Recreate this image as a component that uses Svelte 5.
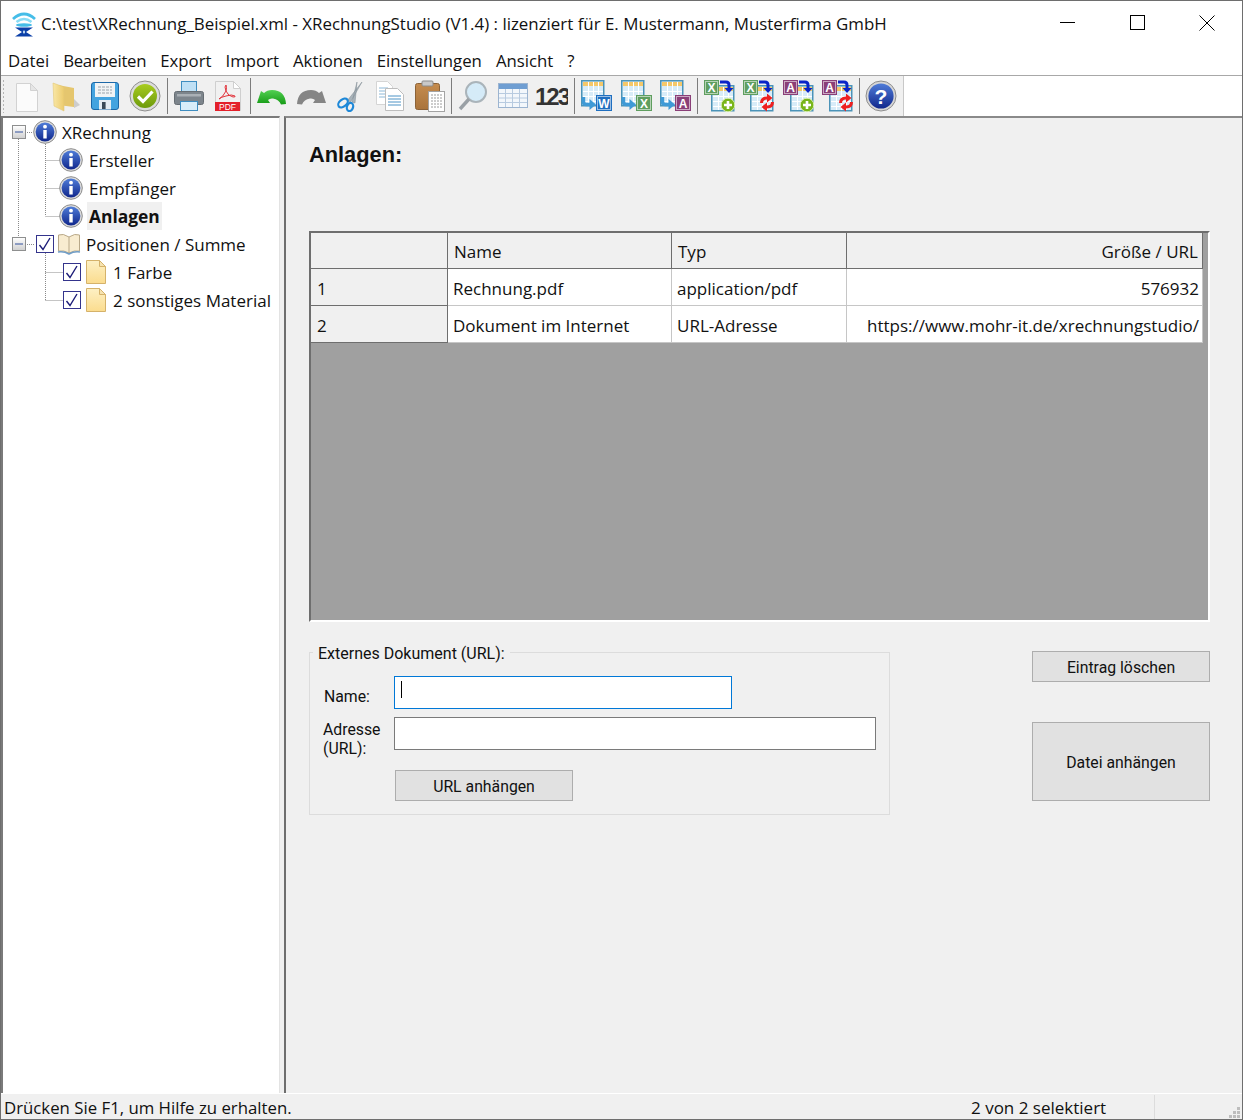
<script>
  const menus = ["Datei", "Bearbeiten", "Export", "Import", "Aktionen", "Einstellungen", "Ansicht", "?"];

  const toolGroups = [
    ["new", "open", "save", "check"],
    ["print", "pdf"],
    ["undo", "redo", "cut", "copy", "paste"],
    ["search", "table", "num"],
    ["expW", "expX", "expA"],
    ["impXadd", "impXsync", "impAadd", "impAsync"],
    ["help"]
  ];

  const rows = [
    { nr: 1, name: "Rechnung.pdf", typ: "application/pdf", size: "576932" },
    { nr: 2, name: "Dokument im Internet", typ: "URL-Adresse", size: "https://www.mohr-it.de/xrechnungstudio/" }
  ];

  const exportColors = { W: "#1f6fc0", X: "#5f9e5f", A: "#8a3f78" };
</script>

{#snippet sheet(x, y)}
  <rect x={x + 0.75} y={y + 0.75} width="22" height="25" fill="#d8ecf8" stroke="#4b93b8" stroke-width="1.5" />
  <rect x={x + 2} y={y + 2} width="20" height="4" fill="#f5c869" />
  <path
    d="M{x + 2} {y + 11.5}h20M{x + 2} {y + 16.5}h20M{x + 2} {y + 21.5}h20M{x + 7.5} {y + 2}v23M{x + 12.5} {y + 2}v23M{x + 17.5} {y + 2}v23"
    stroke="#fff"
    fill="none" />
{/snippet}

{#snippet badge(x, y, letter, size)}
  <rect x={x + 0.5} y={y + 0.5} width={size - 1} height={size - 1} fill={exportColors[letter]} stroke={exportColors[letter]} />
  <rect x={x + 1.5} y={y + 1.5} width={size - 3} height={size - 3} fill="none" stroke="#fff" stroke-opacity="0.55" />
  <text x={x + size / 2} y={y + size - 3.5} class="badge-label" text-anchor="middle">{letter}</text>
{/snippet}

{#snippet exportIcon(letter)}
  {@render sheet(1, 0)}
  <path d="M3.5 17v4.5q0 3 3 3h4" stroke="#3f9ad6" stroke-width="3.4" fill="none" />
  <path d="M9.5 19l6.5 5.5l-6.5 5.500z" fill="#3f9ad6" />
  {@render badge(16, 15, letter, 16)}
{/snippet}

{#snippet importIcon(letter, action)}
  {@render sheet(8, 5)}
  {@render badge(1, 0, letter, 15)}
  <path d="M17 2h6q3 0 3 3v4" stroke="#0a24c8" stroke-width="3" fill="none" />
  <path d="M21.5 8h9l-4.5 5z" fill="#0a24c8" />
  {#if action === "add"}
    <circle cx="25" cy="25" r="6.8" fill="#79b51a" stroke="#d9eeb0" />
    <path d="M21 25h8M25 21v8" stroke="#fff" stroke-width="2.6" />
  {:else}
    <path d="M19.5 23q0 -5 5.500 -5h1" stroke="#ee2020" stroke-width="3" fill="none" />
    <path d="M25 13.500l5.500 4.500l-5.500 4.500z" fill="#ee2020" />
    <path d="M30.500 22q0 5 -5.500 5h-1" stroke="#ee2020" stroke-width="3" fill="none" />
    <path d="M25 22.500l-5.500 4.500l5.500 4.500z" fill="#ee2020" />
  {/if}
{/snippet}

{#snippet icon(name)}
  <svg class="tool-icon" width="32" height="32" viewBox="0 0 32 32">
    {#if name === "new"}
      <path d="M5.500 3.500h14l7 7v21h-21z" fill="#fbfbfb" stroke="#d2d2d2" />
      <path d="M19.500 3.500v7h7z" fill="#e6e6e6" stroke="#d2d2d2" />
    {:else if name === "open"}
      <path d="M8 5l16 3v19l-16 -2z" fill="#e5c66e" />
      <path d="M3 3l11 4v24l-10 -5z" fill="url(#folder)" stroke="#e3c777" stroke-width="0.6" />
      <path d="M24 19l6 6l-6 3z" fill="#bdbdbd" opacity="0.7" />
    {:else if name === "save"}
      <rect x="2.500" y="2.500" width="27" height="27" rx="2.500" fill="#44a3df" stroke="#1d68a8" />
      <rect x="6" y="3" width="20" height="14" fill="#f0f3f5" />
      <path d="M9 7h14M9 10h14M9 13h14" stroke="#9aa4ab" stroke-width="1.200" stroke-dasharray="3 1" />
      <rect x="10" y="20" width="12" height="9.500" fill="#e5edf3" />
      <rect x="13" y="22" width="3.600" height="7" fill="#3a4a58" />
    {:else if name === "check"}
      <circle cx="16" cy="16" r="15" fill="#dcdcdc" stroke="#8f8f8f" />
      <circle cx="16" cy="16" r="12" fill="url(#green)" />
      <path d="M9 16.500l5 5l9.500 -10" stroke="#fff" stroke-width="3.200" fill="none" />
    {:else if name === "print"}
      <rect x="8.500" y="1.500" width="15" height="11" fill="#bfe0f5" stroke="#3f8dc0" />
      <rect x="1.500" y="11.500" width="29" height="13" rx="2" fill="#7d858c" stroke="#666d73" />
      <rect x="4" y="14" width="24" height="2.500" fill="#aab0b5" />
      <rect x="7.500" y="21.500" width="17" height="9" fill="#d9edf9" stroke="#3f8dc0" />
    {:else if name === "pdf"}
      <path d="M3.500 1.500h18l7 7v22h-25z" fill="#f1f1f1" stroke="#cfcfcf" />
      <path d="M21.500 1.500v7h7z" fill="#fff" stroke="#cfcfcf" />
      <path d="M7 19q4 -2 7 -8q1 -4 0 -6q-2 1 0 6q2 5 7 6q3 0 2 -1q-3 -2 -9 0q-5 1 -7 3z" fill="none" stroke="#e2323a" stroke-width="1" />
      <rect x="3" y="22" width="25" height="9" fill="#e3202a" />
      <text x="15.500" y="29.500" class="pdf-label" text-anchor="middle">PDF</text>
    {:else if name === "undo"}
      <path d="M30 23q-1 -14 -14 -14q-5 0 -8 3l-3 -2l-4 12h13l-2 -3q2 -2 5 -1.500q6 1 8 6z" fill="url(#undo)" transform="translate(0 1)" />
    {:else if name === "redo"}
      <path d="M2 23q1 -14 14 -14q5 0 8 3l3 -2l4 12h-13l2 -3q-2 -2 -5 -1.500q-6 1 -8 6z" fill="#858585" transform="translate(0 1)" />
    {:else if name === "cut"}
      <path d="M27 2l-15 19l3 2zM22 2l-5 20l3 1z" fill="#a9b3ba" stroke="#7e8a92" stroke-width="0.5" />
      <ellipse cx="8" cy="23" rx="5.500" ry="3.500" transform="rotate(-40 8 23)" fill="none" stroke="#1e88d8" stroke-width="2.200" />
      <ellipse cx="15" cy="27" rx="3" ry="4.200" transform="rotate(20 15 27)" fill="none" stroke="#1e88d8" stroke-width="2.200" />
    {:else if name === "copy"}
      <path d="M2.500 1.500h11l5 5v18h-16z" fill="#fff" stroke="#d5d5d5" />
      <path d="M5 8h9M5 11h9M5 14h9M5 17h9" stroke="#8cb8d8" />
      <path d="M11.500 8.500h12l6 6v16h-18z" fill="#fff" stroke="#bdbdbd" />
      <path d="M14 16h13M14 19h13M14 22h13M14 25h13" stroke="#4d93c6" />
    {:else if name === "paste"}
      <rect x="1.500" y="3.500" width="24" height="26" rx="2" fill="url(#board)" stroke="#8b6238" />
      <rect x="8" y="1" width="11" height="5" rx="1" fill="#c9c9c9" stroke="#8c8c8c" />
      <rect x="14.500" y="11.500" width="16" height="20" fill="#fff" stroke="#a3a3a3" />
      <path d="M17 15h11M17 18h11M17 21h11M17 24h11M17 27h11" stroke="#9a9a9a" stroke-dasharray="2 1" />
    {:else if name === "search"}
      <circle cx="19" cy="12" r="10" fill="#d5ebf8" stroke="#aab4ba" stroke-width="2" />
      <path d="M12 19L3 29" stroke="#9aa0a5" stroke-width="3.400" />
    {:else if name === "table"}
      <rect x="1.500" y="3.500" width="29" height="24" fill="#f3f7fb" stroke="#9cb4d0" />
      <rect x="2" y="4" width="28" height="5" fill="#6f9ed2" />
      <path d="M2 13.500h28M2 18h28M2 22.500h28M8.500 9v18M15.500 9v18M22.500 9v18" stroke="#b8cbe0" fill="none" />
    {:else if name === "num"}
      <text x="16" y="25" class="num-label" text-anchor="middle">123</text>
    {:else if name === "expW"}
      {@render exportIcon("W")}
    {:else if name === "expX"}
      {@render exportIcon("X")}
    {:else if name === "expA"}
      {@render exportIcon("A")}
    {:else if name === "impXadd"}
      {@render importIcon("X", "add")}
    {:else if name === "impXsync"}
      {@render importIcon("X", "sync")}
    {:else if name === "impAadd"}
      {@render importIcon("A", "add")}
    {:else if name === "impAsync"}
      {@render importIcon("A", "sync")}
    {:else if name === "help"}
      <circle cx="16" cy="16" r="15" fill="#d6d6d6" stroke="#8d8d8d" />
      <circle cx="16" cy="16" r="12.600" fill="url(#blue)" />
      <text x="16" y="23.500" class="help-label" text-anchor="middle">?</text>
    {/if}
  </svg>
{/snippet}

{#snippet info()}
  <svg class="node-icon" width="24" height="24" viewBox="0 0 24 24">
    <circle cx="12" cy="12" r="11.300" fill="#dcdcdc" stroke="#8d8d8d" />
    <circle cx="12" cy="12" r="9.400" fill="url(#blue)" />
    <circle cx="12" cy="6.700" r="1.900" fill="#fff" />
    <rect x="10.300" y="10" width="3.400" height="8.500" fill="#fff" />
  </svg>
{/snippet}

{#snippet check()}
  <svg class="node-icon" width="18" height="18" viewBox="0 0 18 18">
    <rect x="0.500" y="0.500" width="17" height="17" fill="#fff" stroke="#34348c" />
    <path d="M3.500 10l3.500 4.500L14 3" stroke="#1c1c78" stroke-width="1.400" fill="none" />
  </svg>
{/snippet}

{#snippet note()}
  <svg class="node-icon" width="20" height="24" viewBox="0 0 20 24">
    <path d="M0.500 0.500h13l6 6v17h-19z" fill="url(#note)" stroke="#d5b26a" />
    <path d="M13.500 0.500v6h6z" fill="#f6e3b0" stroke="#d5b26a" />
  </svg>
{/snippet}

{#snippet expander()}
  <svg class="expander" width="14" height="14" viewBox="0 0 14 14">
    <rect x="0.500" y="0.500" width="13" height="13" fill="url(#expander)" stroke="#8e8f8f" />
    <path d="M3 7h8" stroke="#33519c" />
  </svg>
{/snippet}

<svg class="defs" width="0" height="0">
  <defs>
    <linearGradient id="blue" x1="0" y1="0" x2="0" y2="1">
      <stop offset="0" stop-color="#4f7cd8" />
      <stop offset="1" stop-color="#10278c" />
    </linearGradient>
    <linearGradient id="green" x1="0" y1="0" x2="0" y2="1">
      <stop offset="0" stop-color="#a8cc20" />
      <stop offset="1" stop-color="#6d9a0c" />
    </linearGradient>
    <linearGradient id="undo" x1="0" y1="0" x2="0" y2="1">
      <stop offset="0" stop-color="#52d052" />
      <stop offset="1" stop-color="#159a15" />
    </linearGradient>
    <linearGradient id="folder" x1="0" y1="0" x2="1" y2="0">
      <stop offset="0" stop-color="#f9e7a6" />
      <stop offset="1" stop-color="#eccb6d" />
    </linearGradient>
    <linearGradient id="board" x1="0" y1="0" x2="0" y2="1">
      <stop offset="0" stop-color="#c58c4f" />
      <stop offset="1" stop-color="#a9743c" />
    </linearGradient>
    <linearGradient id="note" x1="0" y1="0" x2="0" y2="1">
      <stop offset="0" stop-color="#fdf0c4" />
      <stop offset="1" stop-color="#fbdc8e" />
    </linearGradient>
    <linearGradient id="expander" x1="0" y1="0" x2="0" y2="1">
      <stop offset="0" stop-color="#fff" />
      <stop offset="1" stop-color="#cfcfcf" />
    </linearGradient>
  </defs>
</svg>

<div class="window">
  <header class="titlebar">
    <svg class="logo" width="26" height="26" viewBox="0 0 26 26">
      <path d="M2 8q11 -10 22 0" stroke="#45bde8" stroke-width="2.800" fill="none" />
      <path d="M5.500 11q7.500 -6 15 0" stroke="#8adcf5" stroke-width="2.600" fill="none" />
      <ellipse cx="13" cy="14" rx="8" ry="1.800" fill="#45bde8" />
      <path d="M4 16.500h18l-7 4.500l7 4.500H4l7 -4.500z" fill="#0b3fa8" />
      <path d="M13 19l1.200 2l-1.200 2l-1.200 -2z" fill="#cfe6f8" />
    </svg>
    <span class="title">C:\test\XRechnung_Beispiel.xml - XRechnungStudio (V1.4) : lizenziert für E. Mustermann, Musterfirma GmbH</span>
    <div class="window-controls">
      <svg width="16" height="16" viewBox="0 0 16 16"><path d="M0 7.500h15" stroke="#000" /></svg>
      <svg width="16" height="16" viewBox="0 0 16 16"><rect x="0.500" y="0.500" width="14" height="14" fill="none" stroke="#000" /></svg>
      <svg width="16" height="16" viewBox="0 0 16 16"><path d="M0.500 0.500l15 15M15.500 0.500l-15 15" stroke="#000" /></svg>
    </div>
  </header>

  <nav class="menubar">
    {#each menus as menu}
      <span class="menu-item">{menu}</span>
    {/each}
  </nav>

  <div class="toolbar">
    <div class="tools">
      <span class="gripper"></span>
      {#each toolGroups as group}
        <div class="tool-group">
          {#each group as name}
            <button class="tool">{@render icon(name)}</button>
          {/each}
        </div>
      {/each}
    </div>
  </div>

  <div class="workspace">
    <aside class="tree">
      <svg class="tree-lines" width="100" height="190">
        <path d="M16.500 21V119M23 14.500h8M43.500 24V98M43.500 42.500h15M43.500 70.500h15M43.500 98.500h15M23 126.500h10M43.500 135V182M43.500 154.500h17M43.500 182.500h17" stroke="#8a8a8a" stroke-dasharray="1 1" fill="none" />
      </svg>
      <div class="node root">{@render expander()}{@render info()}<span class="label">XRechnung</span></div>
      <div class="node child">{@render info()}<span class="label">Ersteller</span></div>
      <div class="node child">{@render info()}<span class="label">Empfänger</span></div>
      <div class="node child">{@render info()}<span class="label selected">Anlagen</span></div>
      <div class="node root positions">
        {@render expander()}
        {@render check()}
        <svg class="node-icon book" width="24" height="22" viewBox="0 0 24 22">
          <path d="M12 4Q6 0 1.500 2v16q5 -1 10.500 2q5.500 -3 10.500 -2V2Q18 0 12 4z" fill="#f8ecd0" stroke="#b8a888" />
          <path d="M12 4v16" stroke="#b8a888" />
          <path d="M1 19q6 -1 11 2q5 -3 11 -2" stroke="#6f9cc6" stroke-width="1.500" fill="none" />
        </svg>
        <span class="label">Positionen / Summe</span>
      </div>
      <div class="node leaf">{@render check()}{@render note()}<span class="label">1 Farbe</span></div>
      <div class="node leaf">{@render check()}{@render note()}<span class="label">2 sonstiges Material</span></div>
    </aside>

    <main class="content">
      <h1>Anlagen:</h1>

      <div class="grid-view">
        <table>
          <thead>
            <tr>
              <th class="col-nr"></th>
              <th class="col-name">Name</th>
              <th class="col-typ">Typ</th>
              <th class="col-size">Größe / URL</th>
            </tr>
          </thead>
          <tbody>
            {#each rows as row}
              <tr>
                <th class="row-head">{row.nr}</th>
                <td>{row.name}</td>
                <td>{row.typ}</td>
                <td class="right">{row.size}</td>
              </tr>
            {/each}
          </tbody>
        </table>
      </div>

      <div class="lower">
        <fieldset>
          <legend>Externes Dokument (URL):</legend>
          <div class="form">
            <label for="doc-name" class="name-label">Name:</label>
            <div class="focus-field">
              <input id="doc-name" class="focused" type="text" />
              <span class="caret"></span>
            </div>
            <label for="doc-url" class="url-label">Adresse<br />(URL):</label>
            <input id="doc-url" type="text" />
            <button class="btn url-btn">URL anhängen</button>
          </div>
        </fieldset>

        <div class="side-actions">
          <button class="btn delete-btn">Eintrag löschen</button>
          <button class="btn attach-btn">Datei anhängen</button>
        </div>
      </div>
    </main>
  </div>

  <footer class="statusbar">
    <span class="status-text">Drücken Sie F1, um Hilfe zu erhalten.</span>
    <span class="status-count">2 von 2 selektiert</span>
    <span class="status-rest">
      <svg width="12" height="12" viewBox="0 0 12 12" fill="#bdbdbd">
        <rect x="8" y="0" width="3" height="3" />
        <rect x="4" y="4" width="3" height="3" />
        <rect x="8" y="4" width="3" height="3" />
        <rect x="0" y="8" width="3" height="3" />
        <rect x="4" y="8" width="3" height="3" />
        <rect x="8" y="8" width="3" height="3" />
      </svg>
    </span>
  </footer>
</div>

<style>
  :global(body) {
    background: #f0f0f0;
  }

  .defs {
    position: absolute;
  }

  .window {
    box-sizing: border-box;
    width: 1243px;
    height: 1120px;
    display: flex;
    flex-direction: column;
    border: 1px solid #6e6e6e;
    font-family: "Open Sans", "Noto Sans", sans-serif;
    font-size: 17px;
    color: #111;
    background: #f0f0f0;
    overflow: hidden;
  }

  .titlebar {
    height: 45px;
    flex: none;
    display: flex;
    align-items: center;
    background: #fff;
    padding-left: 10px;
  }

  .logo {
    margin-right: 4px;
  }

  .title {
    flex: 1;
    font-size: 16.9px;
    white-space: nowrap;
  }

  .window-controls {
    display: flex;
    gap: 53.5px;
    padding-right: 27px;
    margin-bottom: 2px;
  }

  .menubar {
    box-sizing: border-box;
    height: 30px;
    flex: none;
    display: flex;
    align-items: center;
    gap: 14px;
    padding: 0 0 1px 7px;
    font-size: 16.8px;
    background: #fff;
    border-bottom: 1px solid #a8a8a8;
  }

  .menu-item:nth-child(2) {
    letter-spacing: -0.3px;
  }

  .toolbar {
    height: 40px;
    flex: none;
    display: flex;
    background: #fff;
  }

  .tools {
    display: flex;
    align-items: center;
    padding-left: 1px;
    background: #f0f0f0;
  }

  .gripper {
    width: 3px;
    height: 34px;
    margin-right: 0.5px;
    background-image: radial-gradient(#b4b4b4 1px, transparent 1px);
    background-size: 3px 4px;
  }

  .tool-group {
    display: flex;
    height: 36px;
    align-items: center;
    padding: 0 2px 0 1.5px;
    border-right: 1px solid #7c7c7c;
  }

  .tool-group:last-child {
    height: 40px;
    border-right-color: #c8c8c8;
  }

  .tool {
    width: 39.4px;
    height: 36px;
    padding: 0;
    border: 0;
    background: none;
    display: flex;
    align-items: center;
    justify-content: center;
  }

  .pdf-label {
    font-family: "Liberation Sans", sans-serif;
    font-size: 8.500px;
    fill: #fff;
  }

  .badge-label {
    font-family: "Liberation Sans", sans-serif;
    font-weight: 700;
    font-size: 12px;
    fill: #fff;
  }

  .num-label {
    font-family: "Liberation Sans", sans-serif;
    font-weight: 700;
    font-size: 24px;
    letter-spacing: -2px;
    fill: #333;
  }

  .help-label {
    font-family: "Liberation Sans", sans-serif;
    font-weight: 700;
    font-size: 21px;
    fill: #fff;
  }

  .workspace {
    flex: 1;
    display: flex;
    min-height: 0;
  }

  .tree {
    position: relative;
    width: 279px;
    flex: none;
    box-sizing: border-box;
    background: #fff;
    border-left: 2px solid #7a7a7a;
    border-top: 2px solid #7a7a7a;
    border-right: 1px solid #e3e3e3;
  }

  .tree-lines {
    position: absolute;
    left: -1px;
    top: 0;
  }

  .node {
    position: relative;
    height: 28px;
    display: flex;
    align-items: center;
    white-space: nowrap;
  }

  .node.root {
    padding-left: 9px;
  }

  .node.child {
    padding-left: 56px;
  }

  .node.leaf {
    padding-left: 60px;
  }

  .expander {
    margin-right: 7px;
  }

  .positions .expander {
    margin-right: 10px;
  }

  .label {
    margin-left: 5px;
  }

  .child .label {
    margin-left: 6px;
  }

  .leaf .label {
    margin-left: 4px;
  }

  .child .label.selected {
    margin-left: 4px;
    height: 28px;
    line-height: 29px;
    padding: 0 2px;
    font-weight: 700;
    font-size: 17.400px;
    background: #f0f0f0;
  }

  .book {
    margin-left: 3px;
  }

  .leaf .node-icon:nth-of-type(2) {
    margin-left: 5px;
    margin-right: 3px;
  }

  .content {
    flex: 1;
    margin-left: 4px;
    padding: 0 32px 0 23px;
    border-left: 2px solid #6e6e6e;
    border-top: 2px solid #8a8a8a;
    min-width: 0;
  }

  h1 {
    margin: 0;
    padding-top: 24px;
    height: 89px;
    font-family: "Liberation Sans", sans-serif;
    font-size: 21.800px;
    line-height: 26px;
    font-weight: 700;
  }

  .grid-view {
    box-sizing: border-box;
    height: 391px;
    background: #a0a0a0;
    border: solid #fff;
    border-width: 2px;
    border-top-color: #6e6e6e;
    border-left-color: #6e6e6e;
  }

  table {
    width: 892px;
    table-layout: fixed;
    border-collapse: separate;
    border-spacing: 0;
  }

  th,
  td {
    height: 37px;
    box-sizing: border-box;
    padding: 2px 5px 0 5px;
    font-weight: 400;
    text-align: left;
    white-space: nowrap;
    border-right: 1px solid #c6c6c6;
    border-bottom: 1px solid #c6c6c6;
    background: #fff;
  }

  thead th {
    height: 36px;
    background: #f0f0f0;
    padding-left: 6px;
    border-right: 1px solid #6e6e6e;
    border-bottom: 1px solid #6e6e6e;
  }

  .col-nr {
    width: 137px;
  }

  .col-name {
    width: 224px;
  }

  .col-typ {
    width: 175px;
  }

  .right {
    text-align: right;
    padding-right: 3px;
  }

  thead .col-size {
    text-align: right;
    padding-right: 4px;
  }

  .row-head {
    background: #f0f0f0;
    padding-left: 6px;
    border-right: 1px solid #6e6e6e;
    border-bottom: 1px solid #6e6e6e;
  }

  .lower {
    display: flex;
    justify-content: space-between;
    margin-top: 19px;
    font-family: "Roboto", sans-serif;
    font-size: 15.800px;
  }

  fieldset {
    box-sizing: border-box;
    width: 581px;
    margin: 0;
    padding: 13px;
    border: 1px solid #dcdcdc;
  }

  legend {
    margin-left: -10px;
    padding: 0 5px;
    height: 22px;
    line-height: 26px;
    font-size: 16px;
  }

  .form {
    display: grid;
    grid-template-columns: 71px auto;
    justify-content: start;
    align-items: center;
    row-gap: 8px;
  }

  .name-label {
    padding-left: 1px;
    padding-top: 7px;
  }

  label {
    line-height: 19px;
  }

  .url-label {
    box-sizing: border-box;
    height: 33px;
    padding-top: 3px;
    align-self: start;
  }

  input {
    box-sizing: border-box;
    display: block;
    width: 482px;
    height: 33px;
    padding: 0;
    background: #fff;
    border: 1px solid #7a7a7a;
    outline: 0;
  }

  .focus-field {
    position: relative;
    width: 338px;
  }

  input.focused {
    width: 338px;
    border-color: #0078d7;
  }

  .caret {
    position: absolute;
    left: 7px;
    top: 5px;
    width: 1px;
    height: 17px;
    background: #000;
  }

  .btn {
    font: inherit;
    color: #111;
    width: 178px;
    height: 31px;
    padding: 2px 0 0;
    background: #e1e1e1;
    border: 1px solid #adadad;
  }

  .url-btn {
    grid-column: 2;
    margin: 12px 0 0 1px;
  }

  .side-actions {
    display: flex;
    flex-direction: column;
    gap: 40px;
    padding-top: 10px;
  }

  .attach-btn {
    height: 79px;
  }

  .statusbar {
    height: 26px;
    flex: none;
    display: flex;
    align-items: center;
    border-top: 1px solid #fff;
    box-sizing: border-box;
    padding: 1px 0 0 3px;
    background: #f0f0f0;
    white-space: nowrap;
  }

  .status-text {
    width: 967px;
    font-size: 16.800px;
  }

  .status-count {
    width: 183px;
    height: 100%;
    line-height: 25px;
    border-right: 1px solid #dcdcdc;
  }

  .status-rest {
    flex: 1;
    display: flex;
    justify-content: flex-end;
    align-self: flex-end;
    padding-right: 1px;
  }
</style>
